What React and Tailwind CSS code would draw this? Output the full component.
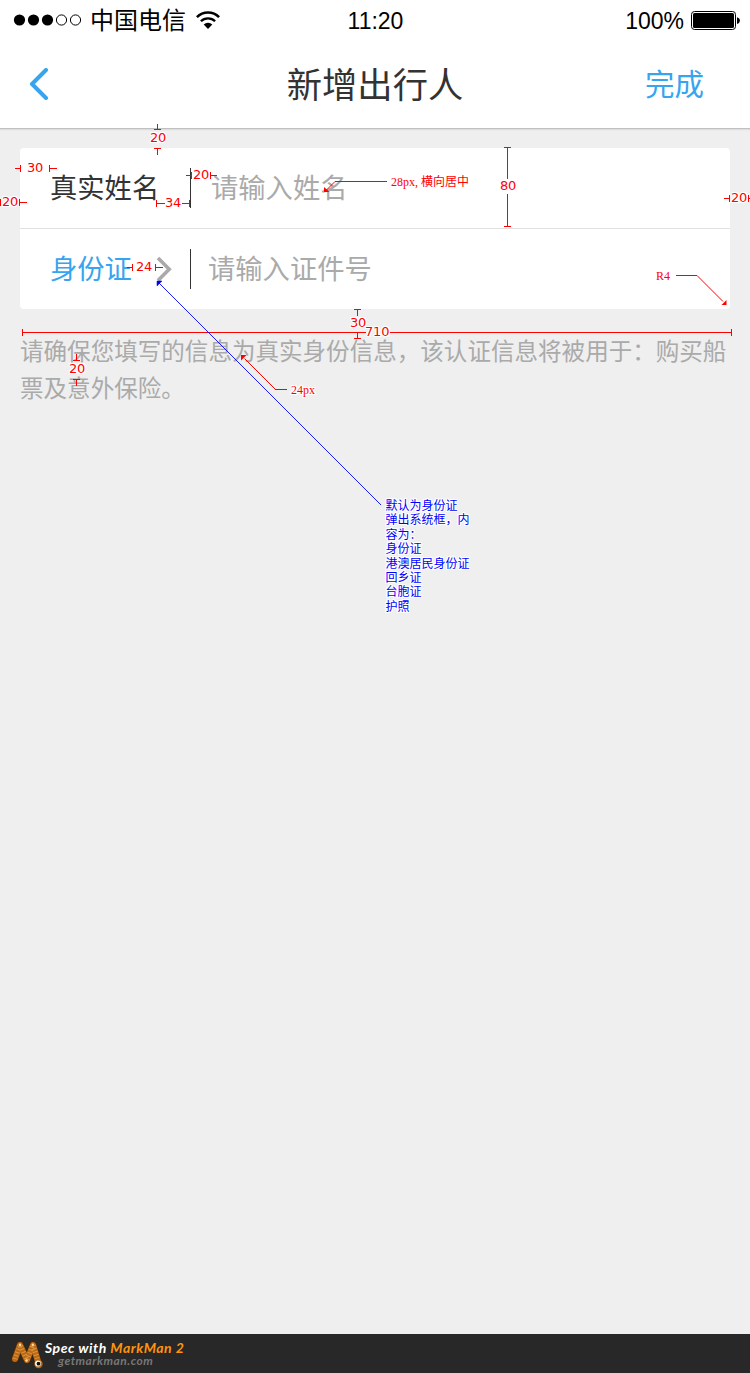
const CJK = `font-['Noto_Sans_CJK_SC',sans-serif]`;

function SignalDots() {
  return (
    <svg className="h-3 w-[70px]" viewBox="0 0 70 12">
      <circle cx="6.5" cy="6" r="5.6" />
      <circle cx="20.5" cy="6" r="5.6" />
      <circle cx="34.5" cy="6" r="5.6" />
      <circle cx="48.5" cy="6" r="5.1" fill="none" stroke="#000" />
      <circle cx="62.5" cy="6" r="5.1" fill="none" stroke="#000" />
    </svg>
  );
}

function Wifi() {
  return (
    <svg className="h-[19px] w-6" viewBox="0 0 24 19" fill="none" stroke="#000">
      <path d="M0.9 6.2a15.7 15.7 0 0 1 22.2 0" strokeWidth="2.5" />
      <path d="M4.9 10.3a10 10 0 0 1 14.2 0" strokeWidth="2.3" />
      <path d="M12 18L7.7 13.6a6.2 6.2 0 0 1 8.6 0z" fill="#000" stroke="none" />
    </svg>
  );
}

function Battery() {
  return (
    <svg className="h-5 w-[50px]" viewBox="0 0 50 20">
      <rect x="0.5" y="0.5" width="44" height="18" rx="3" fill="none" stroke="#000" />
      <rect x="2" y="2" width="41" height="15" rx="1.6" />
      <path d="M46 6.2q3 1 3 3.4t-3 3.4z" />
    </svg>
  );
}

function StatusBar() {
  return (
    <div className="grid h-10 grid-cols-3 items-center pr-[9px] pl-[13px] text-2xl text-black">
      <div className="flex items-center">
        <SignalDots />
        <span className={`${CJK} ml-[7px] pb-[2px] text-2xl leading-none whitespace-nowrap`}>中国电信</span>
        <span className="ml-[10px]"><Wifi /></span>
      </div>
      <div className="pt-[3px] pr-[3px] text-center font-['Liberation_Sans',sans-serif] text-[23px]">11:20</div>
      <div className="flex items-center justify-end gap-[7px] font-['Liberation_Sans',sans-serif] text-[23px]">
        <span className="pt-[3px]">100%</span>
        <span className="flex pt-[2px]"><Battery /></span>
      </div>
    </div>
  );
}

function NavBar() {
  return (
    <div className="grid h-[88px] grid-cols-[1fr_auto_1fr] items-center pr-[46px] pl-[29px]">
      <svg className="h-8 w-5" viewBox="0 0 20 32" fill="none" stroke="#36a4ef" strokeWidth="4" strokeLinecap="round" strokeLinejoin="round">
        <path d="M17 2L3 16l14 14" />
      </svg>
      <h1 className={`${CJK} pb-[3px] pl-[17px] text-[35.3px] leading-none text-[#333]`}>新增出行人</h1>
      <button className={`${CJK} justify-self-end pb-[3px] text-[29.5px] leading-none text-[#36a4ef]`}>完成</button>
    </div>
  );
}

function Form() {
  return (
    <div className={`${CJK} mx-5 mt-[19px] overflow-hidden rounded bg-white text-[27.3px] leading-none`}>
      <div className="flex h-20 items-center pl-[30px]">
        <span className="w-[140px] pb-[2px] text-[#333]">真实姓名</span>
        <span className="h-10 w-px bg-[#333]" />
        <span className="ml-5 pb-[2px] text-[#aaa]">请输入姓名</span>
      </div>
      <div className="flex h-[81px] items-center border-t border-[#e1e1e1] pl-[30px]">
        <span className="flex w-[140px] items-center text-[#36a4ef]">
          <span className="w-[106px] pb-[2px]">身份证</span>
          <svg className="h-[26px] w-4" viewBox="0 0 16 26" fill="none" stroke="#aaa" strokeWidth="3.6">
            <path d="M2 2l11.200 11.200L2 24.400" />
          </svg>
        </span>
        <span className="h-10 w-px bg-[#333]" />
        <span className="ml-[17px] pb-[2px] text-[#aaa]">请输入证件号</span>
      </div>
    </div>
  );
}

const halo = "[text-shadow:1px_0_#fff,-1px_0_#fff,0_1px_#fff,0_-1px_#fff,1px_1px_#fff,-1px_-1px_#fff,1px_-1px_#fff,-1px_1px_#fff]";

function Size({ at, children }) {
  return (
    <span className={`absolute ${at} ${halo} font-['DejaVu_Sans',sans-serif] text-[13px] leading-[14px] tracking-[-0.2px] whitespace-nowrap text-[#f00]`}>
      {children}
    </span>
  );
}

function Note({ at, children }) {
  return (
    <span className={`absolute ${at} ${halo} font-['Liberation_Serif','Noto_Sans_CJK_SC',serif] text-[12px] leading-[14.4px] whitespace-nowrap`}>
      {children}
    </span>
  );
}

function Annotations() {
  return (
    <div className="pointer-events-none absolute inset-0 overflow-hidden">
      <svg className="absolute inset-0 h-full w-full" viewBox="0 0 750 1373" fill="none" stroke="#f00">
        <g shapeRendering="crispEdges">
          <path d="M157.500 124v5M154 129.500h7M154 148.500h7M157.500 149v6" />
          <path d="M15 168.500h5M20.500 165v7M49.500 165v7M50 168.500h7" />
          <path d="M0.500 199v7M19.500 199v7M20 202.500h7" />
          <path d="M186 175.500h5M191.500 172v7M210.500 172v7M211 175.500h6" />
          <path d="M156.500 200v7M157 203.500h8M182 203.500h8M189.500 200v7" />
          <path d="M504 147.500h7M507.500 148v31M507.500 194v33M504 226.500h7" />
          <path d="M724 198.500h5M729.500 195v7M748.500 195v7M748 198.500h2" />
          <path d="M127 267.500h5M132.500 264v7M155.500 264v7M156 267.500h7" />
          <path d="M22.500 329v7M23 332.500h343M389 332.500h342M731.500 329v7" />
          <path d="M354 309.500h7M357.500 310v6M354 338.500h7M357.500 333v5" />
          <path d="M76.500 354v6M73 360.500h7M73 379.500h7M76.500 380v6" />
          <path d="M335 181.500h52M676 275.500h21M275 389.500h12" />
        </g>
        <path d="M335 181.500l-9 9M697 275.500l26 26M275.500 389.500l-31-31" />
        <path d="M324 187v5h5.500zM726.500 300v5h-5zM241 355v5.500l5.500-5.500z" fill="#f00" stroke="none" />
        <path d="M159 283l222 222" stroke="#00f" strokeWidth="0.9" />
        <path d="M157 281h5l-5 5z" fill="#00f" stroke="#00f" strokeWidth="0.5" />
      </svg>
      <Size at="left-[150px] top-[131px]">20</Size>
      <Size at="left-[27px] top-[161px]">30</Size>
      <Size at="left-[2px] top-[195px]">20</Size>
      <Size at="left-[193px] top-[168px]">20</Size>
      <Size at="left-[165px] top-[196px]">34</Size>
      <Size at="left-[500px] top-[179px]">80</Size>
      <Size at="left-[731px] top-[191px]">20</Size>
      <Size at="left-[136px] top-[260px]">24</Size>
      <Size at="left-[350px] top-[316px]">30</Size>
      <Size at="left-[365px] top-[325px]">710</Size>
      <Size at="left-[69px] top-[362px]">20</Size>
      <Note at="left-[391px] top-[175px] text-[#f00]">28px, 横向居中</Note>
      <Note at="left-[656px] top-[269px] text-[#f00]">R4</Note>
      <Note at="left-[291px] top-[383px] text-[#f00]">24px</Note>
      <Note at="left-[385.500px] top-[499px] text-[#00f]">
        默认为身份证<br />弹出系统框，内<br />容为：<br />身份证<br />港澳居民身份证<br />回乡证<br />台胞证<br />护照
      </Note>
    </div>
  );
}

function Footer() {
  return (
    <footer className="flex h-[39px] gap-[2px] bg-[#282828] pl-[11px] font-['Lato',sans-serif] font-bold italic">
      <svg className="mt-[6px] h-[29px] w-8" viewBox="0 0 32 29" fill="none" strokeLinecap="round" strokeLinejoin="round">
        <path d="M4 19L9 5l7 15L22 5l5.500 18" stroke="#4a2506" strokeWidth="7.500" />
        <path d="M4 19L9 5l7 15L22 5l5.500 18" stroke="#b9691a" strokeWidth="6" />
        <path d="M4 19L9 5l7 15L22 5l5.500 18" stroke="#dc9638" strokeWidth="5" strokeLinecap="butt" strokeDasharray="1 2.200" />
        <circle cx="9" cy="4.800" r="1.200" fill="#ffe1a0" />
        <circle cx="21.800" cy="4.800" r="1.200" fill="#ffe1a0" />
        <circle cx="15.500" cy="20.500" r="1.200" fill="#ffe1a0" />
        <circle cx="27.500" cy="24" r="4.200" fill="#b66a18" />
        <circle cx="27" cy="23.500" r="2.900" fill="#fff" />
        <circle cx="27.500" cy="23.700" r="1.900" fill="#111" />
      </svg>
      <div className="pt-[7px]">
        <div className="text-[14px] leading-[14px] tracking-[0.5px] whitespace-nowrap text-white">
          Spec with <span className="text-[#ff930c]">MarkMan 2</span>
        </div>
        <div className="pl-[13px] text-[12px] leading-[12px] tracking-[0.5px] text-[#777]">getmarkman.com</div>
      </div>
    </footer>
  );
}

export default function App() {
  return (
    <div className="relative flex h-[1373px] w-[750px] flex-col overflow-hidden bg-[#efefef]">
      <header className="border-b border-[#c0c0c0] bg-white shadow-[0_1px_1px_#ddd]">
        <StatusBar />
        <NavBar />
      </header>
      <main className="flex-1">
        <Form />
        <p className={`${CJK} pt-[23px] pl-5 text-[23.550px] leading-[37px] text-[#aaa]`}>
          请确保您填写的信息为真实身份信息，该认证信息将被用于：购买船
          <br />
          票及意外保险。
        </p>
      </main>
      <Footer />
      <Annotations />
    </div>
  );
}
